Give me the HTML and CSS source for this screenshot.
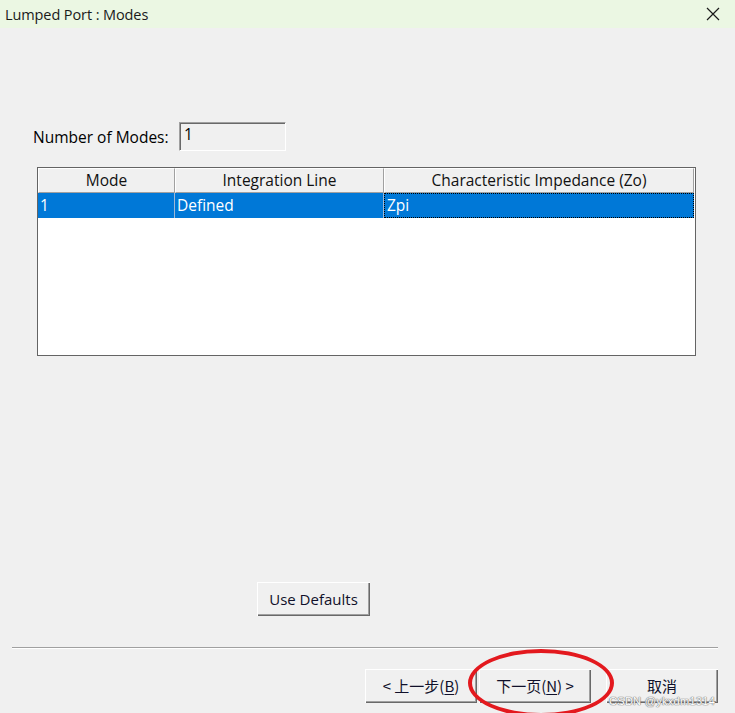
FILE: index.html
```html
<!DOCTYPE html>
<html>

<head>
    <meta charset="UTF-8">
    <title>Lumped Port : Modes</title>
    <link rel="stylesheet" href="styles.css">
</head>

<body>
    <div class="window">
        <div class="titlebar">
            <span class="title">Lumped Port : Modes</span>
            <svg class="close" width="14" height="14" viewBox="0 0 14 14">
                <path d="M1 1 L13 13 M13 1 L1 13" stroke="#1a1a1a" stroke-width="1.2" fill="none" />
            </svg>
        </div>

        <div class="content">
            <div class="field-row">
                <label class="field-label">Number of Modes:</label>
                <div class="field-box">1</div>
            </div>

            <div class="grid">
                <div class="grid-head">
                    <div class="cell col-mode">Mode</div>
                    <div class="cell col-line">Integration Line</div>
                    <div class="cell col-zo">Characteristic Impedance (Zo)</div>
                </div>
                <div class="grid-row selected">
                    <div class="cell col-mode">1</div>
                    <div class="cell col-line">Defined</div>
                    <div class="cell col-zo focus">Zpi</div>
                </div>
            </div>

            <div class="defaults-row">
                <button class="btn btn-defaults">Use Defaults</button>
            </div>
        </div>

        <div class="separator"></div>

        <div class="wizard-buttons">
            <button class="btn btn-wizard">&lt; 上一步(<u>B</u>)</button>
            <button class="btn btn-wizard">下一页(<u>N</u>) &gt;</button>
            <button class="btn btn-wizard btn-cancel">取消</button>
        </div>

        <div class="annotation"></div>
        <div class="watermark">CSDN @ykxdm1314</div>
    </div>
</body>

</html>
```

FILE: styles.css
```css
body {
    margin: 0;
    padding: 0;
    font-family: 'Open Sans', 'Noto Sans', 'Noto Sans CJK SC', sans-serif;
    color: #000;
    background: #F0F0F0;
}

.window {
    position: relative;
    width: 735px;
    height: 713px;
    background: #F0F0F0;
    overflow: hidden;
}

.titlebar {
    height: 28px;
    background: #EBF7E3;
    display: flex;
    align-items: center;
    justify-content: space-between;
    padding: 0 15px 0 5px;
}

.title {
    font-size: 14.5px;
    color: #1a1a1a;
    letter-spacing: -0.1px;
}

.close {
    display: block;
}

.content {
    padding: 94px 0 0 33px;
}

.field-row {
    display: flex;
    align-items: center;
    height: 29px;
}

.field-label {
    font-size: 15.5px;
    width: 146px;
}

.field-box {
    width: 107px;
    height: 29px;
    box-sizing: border-box;
    border-top: 1px solid #A0A0A0;
    border-left: 1px solid #A0A0A0;
    border-right: 1px solid #FFFFFF;
    border-bottom: 1px solid #FFFFFF;
    box-shadow: inset 1px 1px 0 #696969;
    padding: 1px 0 0 4px;
    font-size: 15.5px;
    line-height: 20px;
}

.grid {
    margin: 16px 0 0 4px;
    width: 659px;
    height: 189px;
    box-sizing: border-box;
    border: 1px solid #646464;
    background: #FFFFFF;
}

.grid-head,
.grid-row {
    display: flex;
}

.grid-head .cell {
    height: 25px;
    line-height: 23px;
    text-align: center;
    font-size: 15.5px;
    background: #F0F0F0;
    box-sizing: border-box;
    border-top: 1px solid #FFFFFF;
    border-left: 1px solid #FFFFFF;
    border-right: 1px solid #A0A0A0;
    border-bottom: 1px solid #A0A0A0;
    color: #111;
}

.col-mode {
    width: 137px;
}

.col-line {
    width: 209px;
}

.col-zo {
    width: 310px;
}

.grid-row .cell {
    height: 25px;
    line-height: 24px;
    font-size: 15.5px;
    box-sizing: border-box;
    padding-left: 2px;
    border-right: 1px solid #9DB8D6;
}

.selected .cell {
    background: #0078D7;
    color: #FFFFFF;
}

.selected .cell.focus {
    border: 1px dotted #D9822B;
    outline: 1px dotted #000;
    outline-offset: -1px;
    line-height: 22px;
}

.defaults-row {
    margin: 226px 0 0 224px;
    height: 34px;
}

.btn {
    font-family: 'Open Sans', 'Noto Sans', 'Noto Sans CJK SC', sans-serif;
    font-size: 15px;
    color: #10102A;
    background: #F0F0F0;
    border: none;
    padding: 0;
    box-sizing: border-box;
    box-shadow: inset 1px 1px 0 #FFFFFF, inset -1px -1px 0 #696969, inset -2px -2px 0 #A0A0A0;
    cursor: pointer;
}

.btn-defaults {
    display: block;
    width: 113px;
    height: 34px;
}

.separator {
    margin: 31px 0 0 12px;
    width: 706px;
    height: 1px;
    background: #A0A0A0;
    border-bottom: 1px solid #FFFFFF;
}

.wizard-buttons {
    display: flex;
    margin: 20px 0 0 365px;
    gap: 2px;
}

.btn-wizard {
    width: 112px;
    height: 34px;
    font-family: 'Noto Sans CJK SC', 'Open Sans', sans-serif;
    font-size: 15px;
    padding-bottom: 2px;
}

.btn-wizard u {
    text-underline-offset: 2px;
}

.btn-cancel {
    margin-left: 13px;
}

.annotation {
    position: absolute;
    left: 468px;
    top: 649px;
    width: 138px;
    height: 60px;
    border: 4px solid #E3191E;
    border-radius: 50%;
    pointer-events: none;
}

.watermark {
    position: absolute;
    left: 609px;
    top: 695px;
    font-size: 11px;
    line-height: 12px;
    font-family: 'Liberation Sans', sans-serif;
    color: #FFFFFF;
    text-shadow: 0 0 1px #777, 0 0 1px #777, 0 0 1px #777;
    letter-spacing: 0.3px;
}
```
